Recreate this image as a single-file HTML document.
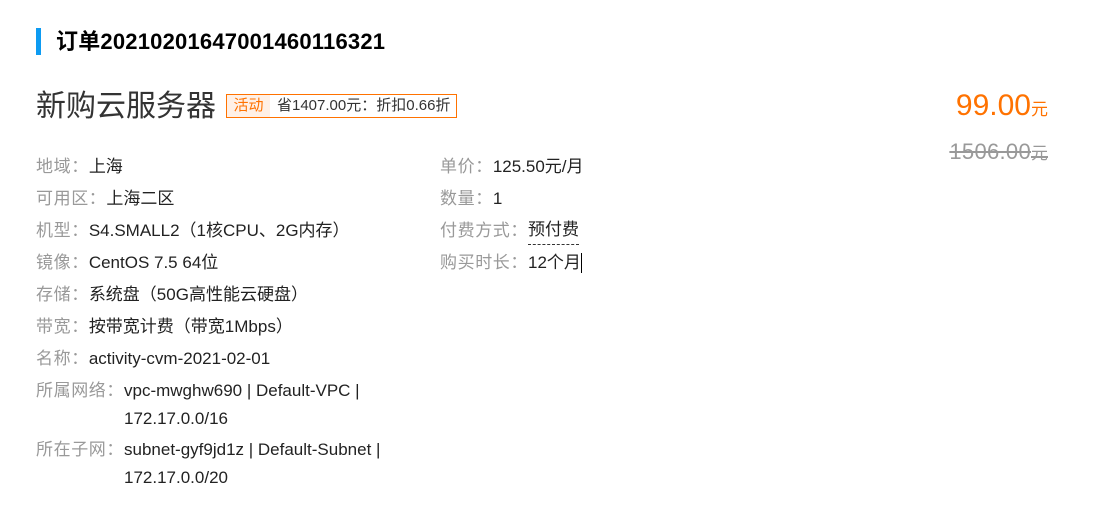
<!DOCTYPE html>
<html><head><meta charset="utf-8"><style>
*{margin:0;padding:0;box-sizing:border-box}
body{width:1094px;height:524px;background:#fff;font-family:"Liberation Sans","Noto Sans CJK SC",sans-serif;position:relative;overflow:hidden;color:#222}
.a{position:absolute;white-space:nowrap}
.bar{left:36px;top:28px;width:5px;height:27px;background:#0d9bf2}
.h{left:56px;top:28px;font-size:22px;font-weight:bold;color:#000;line-height:28px;letter-spacing:0.2px}
.t{left:36px;top:88px;font-size:30px;line-height:38px;color:#333}
.tag{left:226px;top:94px;height:24px;width:231px;border:1px solid #ff7200;font-size:15px;line-height:22px;display:flex}
.tag .k{background:#fff0e6;color:#ff7200;width:43px;text-align:center}
.tag .v{padding-left:7px;color:#333}
.row{font-size:17px;line-height:28px;display:flex}
.row .l{color:#999;letter-spacing:0.6px}
.row .v{color:#222}
.p1{right:46px;top:87px;color:#ff7200;font-size:30px;line-height:38px}
.p1 span{font-size:17px}
.p2{right:46px;top:137px;color:#999;font-size:22px;line-height:30px;text-decoration:line-through;letter-spacing:0.3px}
.p2 span{font-size:17px;letter-spacing:0}
</style></head><body>
<div class="a bar"></div>
<div class="a h">订单20210201647001460116321</div>
<div class="a t">新购云服务器</div>
<div class="a tag"><span class="k">活动</span><span class="v">省1407.00元：折扣0.66折</span></div>
<div class="a p1">99.00<span>元</span></div>
<div class="a p2">1506.00<span>元</span></div>

<div class="a row" style="left:36px;top:153px"><span class="l">地域：</span><span class="v">上海</span></div>
<div class="a row" style="left:36px;top:185px"><span class="l">可用区：</span><span class="v">上海二区</span></div>
<div class="a row" style="left:36px;top:217px"><span class="l">机型：</span><span class="v">S4.SMALL2（1核CPU、2G内存）</span></div>
<div class="a row" style="left:36px;top:249px"><span class="l">镜像：</span><span class="v">CentOS 7.5 64位</span></div>
<div class="a row" style="left:36px;top:281px"><span class="l">存储：</span><span class="v">系统盘（50G高性能云硬盘）</span></div>
<div class="a row" style="left:36px;top:313px"><span class="l">带宽：</span><span class="v">按带宽计费（带宽1Mbps）</span></div>
<div class="a row" style="left:36px;top:345px"><span class="l">名称：</span><span class="v">activity-cvm-2021-02-01</span></div>
<div class="a row" style="left:36px;top:377px"><span class="l">所属网络：</span><span class="v">vpc-mwghw690 | Default-VPC |<br>172.17.0.0/16</span></div>
<div class="a row" style="left:36px;top:436px"><span class="l">所在子网：</span><span class="v">subnet-gyf9jd1z | Default-Subnet |<br>172.17.0.0/20</span></div>

<div class="a row" style="left:440px;top:153px"><span class="l">单价：</span><span class="v">125.50元/月</span></div>
<div class="a row" style="left:440px;top:185px"><span class="l">数量：</span><span class="v">1</span></div>
<div class="a row" style="left:440px;top:217px"><span class="l">付费方式：</span><span class="v" style="border-bottom:1px dashed #333;line-height:26px;height:28px">预付费</span></div>
<div class="a row" style="left:440px;top:249px"><span class="l">购买时长：</span><span class="v">12个月</span><span style="display:inline-block;width:1px;height:20px;background:#000;margin-top:4px"></span></div>
</body></html>
